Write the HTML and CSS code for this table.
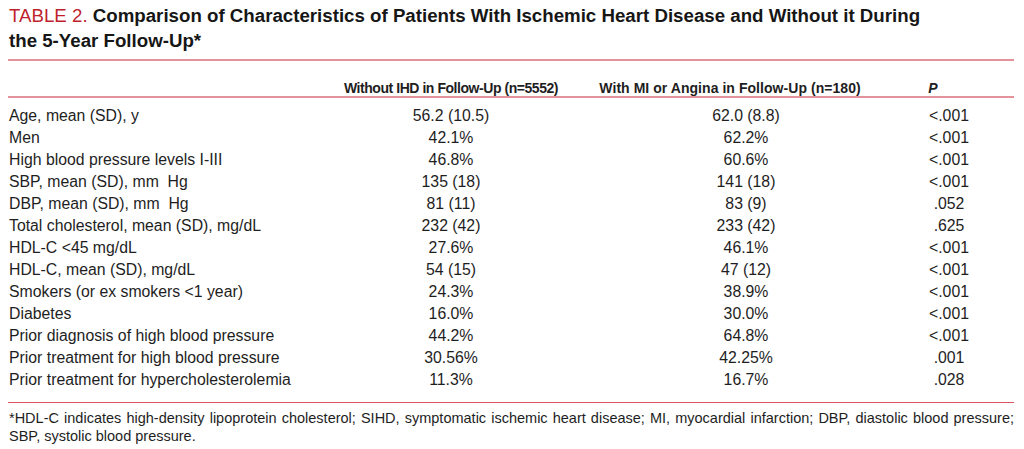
FILE: index.html
```html
<!DOCTYPE html>
<html lang="en">
<head>
<meta charset="utf-8">
<title>Table 2</title>
<link rel="stylesheet" href="styles.css">
</head>
<body>
<div class="page">
  <h1 class="caption"><span class="label">TABLE 2.</span> Comparison of Characteristics of Patients With Ischemic Heart Disease and Without it During the 5-Year Follow-Up*</h1>
  <table class="data">
    <colgroup>
      <col class="c1"><col class="c2"><col class="c3"><col class="c4"><col class="c5">
    </colgroup>
    <thead>
      <tr>
        <th class="h1"></th>
        <th class="h2">Without IHD in Follow-Up (n=5552)</th>
        <th class="h3">With MI or Angina in Follow-Up (n=180)</th>
        <th class="h4"><i>P</i></th>
        <th class="h5"></th>
      </tr>
    </thead>
    <tbody>
      <tr><td>Age, mean (SD), y</td><td>56.2 (10.5)</td><td>62.0 (8.8)</td><td>&lt;.001</td><td></td></tr>
      <tr><td>Men</td><td>42.1%</td><td>62.2%</td><td>&lt;.001</td><td></td></tr>
      <tr><td>High blood pressure levels I-III</td><td>46.8%</td><td>60.6%</td><td>&lt;.001</td><td></td></tr>
      <tr><td>SBP, mean (SD), mm&nbsp; Hg</td><td>135 (18)</td><td>141 (18)</td><td>&lt;.001</td><td></td></tr>
      <tr><td>DBP, mean (SD), mm&nbsp; Hg</td><td>81 (11)</td><td>83 (9)</td><td>.052</td><td></td></tr>
      <tr><td>Total cholesterol, mean (SD), mg/dL</td><td>232 (42)</td><td>233 (42)</td><td>.625</td><td></td></tr>
      <tr><td>HDL-C &lt;45 mg/dL</td><td>27.6%</td><td>46.1%</td><td>&lt;.001</td><td></td></tr>
      <tr><td>HDL-C, mean (SD), mg/dL</td><td>54 (15)</td><td>47 (12)</td><td>&lt;.001</td><td></td></tr>
      <tr><td>Smokers (or ex smokers &lt;1 year)</td><td>24.3%</td><td>38.9%</td><td>&lt;.001</td><td></td></tr>
      <tr><td>Diabetes</td><td>16.0%</td><td>30.0%</td><td>&lt;.001</td><td></td></tr>
      <tr><td>Prior diagnosis of high blood pressure</td><td>44.2%</td><td>64.8%</td><td>&lt;.001</td><td></td></tr>
      <tr><td>Prior treatment for high blood pressure</td><td>30.56%</td><td>42.25%</td><td>.001</td><td></td></tr>
      <tr><td>Prior treatment for hypercholesterolemia</td><td>11.3%</td><td>16.7%</td><td>.028</td><td></td></tr>
    </tbody>
  </table>
  <p class="note"><span class="line">*HDL-C indicates high-density lipoprotein cholesterol; SIHD, symptomatic ischemic heart disease; MI, myocardial infarction; DBP, diastolic blood pressure;</span> SBP, systolic blood pressure.</p>
</div>
</body>
</html>
```

FILE: styles.css
```css
html, body {
  margin: 0;
  padding: 0;
  background: #ffffff;
}

.page {
  width: 1006px;
  padding: 0 0 0 8px;
  font-family: "Liberation Sans", Arial, sans-serif;
  color: #1e1e1e;
}

.caption {
  max-width: 928px;
  margin: 0;
  padding: 3px 0 0 1px;
  font-size: 18.7px;
  line-height: 25px;
  font-weight: bold;
  color: #161616;
}

.caption .label {
  font-weight: normal;
  color: #c01f2e;
}

.data {
  width: 1006px;
  margin-top: 6px;
  border-collapse: collapse;
  table-layout: fixed;
  border-top: 2px solid #e3939a;
}

.c1 { width: 330px; }
.c2 { width: 226px; }
.c3 { width: 364px; }
.c4 { width: 42px; }
.c5 { width: 44px; }

.data thead th {
  font-family: "Liberation Sans", Arial, sans-serif;
  font-weight: bold;
  font-size: 14px;
  line-height: 16px;
  color: #1e1e1e;
  padding: 19px 0 0 0;
  height: 33px;
  box-sizing: border-box;
  vertical-align: top;
  text-align: center;
  white-space: nowrap;
  border-bottom: 2px solid #e3939a;
}

.data thead .h2 { letter-spacing: -0.45px; }
.data thead .h3 { padding-right: 32px; letter-spacing: 0.05px; }
.data thead .h4 { padding-right: 32px; overflow: visible; }

.data tbody td {
  font-size: 15.8px;
  line-height: 22px;
  padding: 0;
  text-align: center;
  white-space: nowrap;
}

.data tbody td:first-child {
  text-align: left;
  padding-left: 1px;
}

.data tbody tr:first-child td { padding-top: 7px; }
.data tbody tr:last-child td {
  padding-bottom: 11px;
  border-bottom: 1px solid #d9525e;
}

.note {
  margin: 6px 0 0 0;
  padding-left: 1px;
  font-size: 14.5px;
  line-height: 18px;
  text-align: left;
  color: #1e1e1e;
}

.note .line {
  display: block;
  text-align: justify;
  text-align-last: justify;
}
```
